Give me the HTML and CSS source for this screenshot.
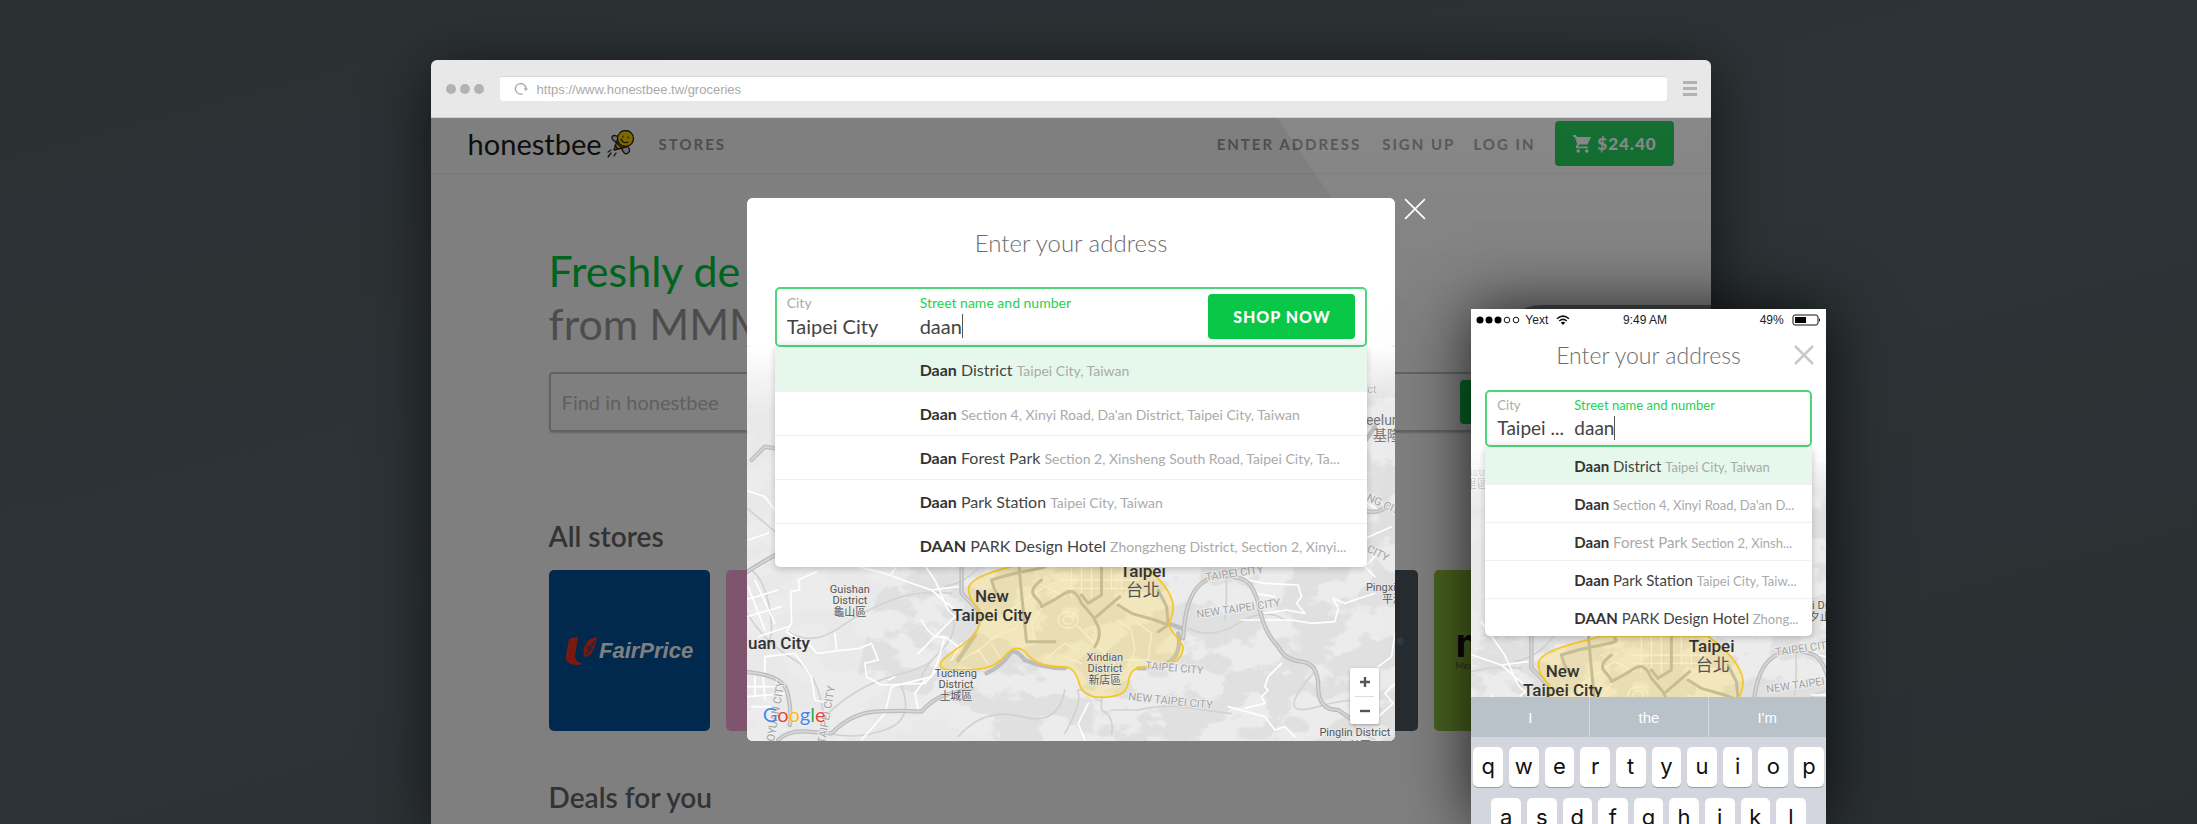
FILE: index.html
```html
<!DOCTYPE html>
<html lang="en">
<head>
<meta charset="utf-8">
<title>honestbee groceries</title>
<link rel="stylesheet" href="styles.css">
</head>
<body>
<svg class="defs" width="0" height="0" aria-hidden="true">
  <defs>
    <filter id="terrain" x="0" y="0" width="100%" height="100%">
      <feTurbulence type="fractalNoise" baseFrequency="0.024 0.034" numOctaves="5" seed="11"/>
      <feColorMatrix values="0 0 0 0 0.84  0 0 0 0 0.84  0 0 0 0 0.84  12 0 0 0 -5.8"/>
    </filter>
    <symbol id="map" viewBox="0 0 649 395" overflow="visible">
      <rect width="649" height="395" fill="#e9e9e9"/>
      <path d="M230 0H649V395H250L215 360 110 330 130 250 200 180Z" fill="#e0e0e0"/>
      <rect width="649" height="395" filter="url(#terrain)"/>
      <g transform="translate(-2 214) scale(.33333)" fill="none" stroke-linejoin="round" stroke-linecap="round">
        <g stroke="#d2d2d2" stroke-width="5">
          <path d="M0 150Q60 250 150 300T240 540M20 30Q60 60 75 150T60 260M130 215Q200 260 280 205T440 120 620 100M0 -160Q50 -120 120 -60M240 470Q330 380 440 350T560 300M255 520Q330 540 420 510T470 380M1070 410V450Q1110 470 1100 520M1068 425Q990 370 1000 400T960 520M600 120Q660 200 590 270T530 370M730 -20Q690 60 600 80"/>
          <path d="M1330 205Q1400 240 1480 190T1620 180M1100 450H1180Q1260 430 1350 445T1460 460M1890 540Q1800 500 1830 450T1720 440 1710 335M1440 30Q1450 90 1440 180M640 530Q720 440 830 470T960 390"/>
        </g>
        <g stroke="#fff" stroke-width="5">
          <path d="M215 35L160 60 165 90 138 95 140 190 125 215 200 260 215 280 300 270 345 265 380 250 400 300 360 310 365 350 410 375 540 370 575 330"/>
          <path d="M10 80L60 210M30 60L90 190M0 120L100 90M5 170L110 140M40 230L130 200M60 290L150 280 200 350 210 420 250 430M30 350V410M55 350L60 420M5 380H100M5 410L130 400M20 440H90M60 290V340M270 220L275 270"/>
          <path d="M320 -30L340 20 420 40 500 70 560 90 640 80M440 40L470 0M500 -40L570 60 610 150 640 180M530 180Q560 240 600 230L640 260M520 280L600 200 650 150M600 230L580 300 560 350 440 380 420 460 350 540M620 300L650 250M560 90L630 150M430 360L450 350M520 450L510 400 540 360M0 -210L60 -190 90 -150M10 -60L70 -80"/>
          <path d="M1490 40L1510 60 1560 70 1660 75 1670 110 1655 130 1680 160 1625 150 1560 160M1510 70L1530 100 1590 110M1610 310L1570 350 1560 380 1570 390 1550 410 1560 430 1500 445M1490 180L1640 180 1700 190 1770 185 1780 145 1765 115 1800 130 1890 100M1950 220L1940 290 1900 320M1890 -10L1860 20 1890 50M1950 370L1920 400 1945 430 1900 470M1030 430L1000 490 1020 540M1450 440L1560 470 1590 510 1620 500 1650 530M1820 -200L1900 -150 1950 -170M1850 -60L1940 -100"/>
        </g>
        <g stroke="#bdbdbd" stroke-width="13">
          <path d="M0 335Q110 345 125 390T135 495M100 540Q130 510 190 515T260 520Q320 460 390 455T530 455Q560 420 600 405L680 385M0 40Q60 0 120 -30T200 -60M650 -10V100L700 150M690 225L640 300M725 340Q770 320 800 275 815 270 840 300 900 325 960 325M1300 220Q1320 330 1180 325M1315 235Q1320 110 1370 70T1500 60Q1530 80 1545 150T1600 260Q1620 300 1670 305T1720 380 1780 450L1830 485M1270 190L1315 207M1240 -240Q1300 -130 1400 -80M1840 -320Q1820 -240 1840 -180T1930 -160M1890 -400L1850 -340M20 -300L60 -340 120 -330"/>
        </g>
        <g stroke="#d7d7d7" stroke-width="5">
          <path d="M0 335Q110 345 125 390T135 495M100 540Q130 510 190 515T260 520Q320 460 390 455T530 455Q560 420 600 405L680 385M0 40Q60 0 120 -30T200 -60M650 -10V100L700 150M1315 235Q1320 110 1370 70T1500 60Q1530 80 1545 150T1600 260Q1620 300 1670 305T1720 380 1780 450L1830 485M1840 -320Q1820 -240 1840 -180T1930 -160M20 -300L60 -340 120 -330"/>
        </g>
        <g stroke="#f6f6f6" stroke-width="4">
          <path d="M950 60H1180M950 85H1170M980 0V110M1010 0V120M1040 0V110M1100 0V90M1130 10V90M1160 20V80M860 60L960 110M780 160L900 80M900 130L860 190 870 250M940 180A30 24 0 1 0 1000 180 30 24 0 1 0 940 180M955 180A15 12 0 1 0 985 180 15 12 0 1 0 955 180M1000 200L1060 260 1110 310M1120 180L1160 210 1170 270 1150 320M1180 190L1220 220 1210 300 1100 300M740 250L770 300M900 300L960 250 1000 270M650 300L700 270 730 310M690 280L750 230 820 200M1010 310L960 290"/>
        </g>
        <g stroke="#b4b4b4" stroke-width="9">
          <path d="M740 60Q750 100 770 120M820 -10L830 100 845 245H930M890 60Q850 90 870 110T890 140Q930 120 960 100T1010 130L1045 170 1060 200Q1070 230 1050 260M1070 -10V105L1030 130 1010 105M1055 170L1125 110M740 60Q800 40 860 30T900 10M1120 135L1160 160 1230 180 1270 195 1240 215M1240 90L1265 140 1270 190"/>
        </g>
        <path d="M861 3C800 22 690 40 672 80C668 110 685 125 700 150C712 185 702 205 684 228C640 270 590 290 586 315C586 332 620 330 680 329C740 325 760 312 790 278C808 262 825 262 840 275C870 312 900 320 950 320C975 320 990 330 1000 360C1008 400 1030 412 1070 412C1120 412 1145 400 1150 370C1155 330 1170 322 1200 322C1270 320 1313 310 1315 262C1300 225 1272 215 1272 190C1290 150 1290 130 1270 95C1250 60 1215 30 1179 3Z" fill="#ffd52b" fill-opacity=".25" stroke="#f6c623" stroke-width="5"/>
      </g>
    </symbol>
    <symbol id="cross" viewBox="0 0 20 20"><path d="M1 1L19 19M19 1L1 19" fill="none" stroke="currentColor"/></symbol>
  </defs>
</svg>

<main class="scene">
  <section class="browser">
    <div class="chrome">
      <div class="dots"><i></i><i></i><i></i></div>
      <div class="address">
        <svg width="14" height="14" viewBox="0 0 14 14" aria-hidden="true"><path d="M8.500 11.800A5.300 5.300 0 1 1 12 7" fill="none" stroke="#a5a5a5" stroke-width="1.300"/><path d="M9.600 6.500H14L11.800 9Z" fill="#a5a5a5"/></svg>
        <input class="url" aria-label="Address" value="https://www.honestbee.tw/groceries">
      </div>
      <button class="burger" aria-label="Menu"><i></i><i></i><i></i></button>
    </div>

    <div class="page">
      <header class="nav">
        <a class="logo" href="#">honestbee
          <svg width="28" height="28" viewBox="0 0 28 28" aria-hidden="true">
            <g stroke="#222" stroke-width="1.300" stroke-linejoin="round" stroke-linecap="round">
              <path d="M12 7Q6 4 5 7T11 13ZM19 15Q25 20 21 23T14 17Z" fill="#ddd"/>
              <path d="M11 8L7 20 19 17 25 12Z" fill="#ffd000"/>
              <circle cx="18.500" cy="8.500" r="8" fill="#ffd000"/>
              <path d="M9 12L15 18M8 15.500L11 19" fill="none"/>
              <path d="M14 9Q16 14 21 12M16 6V7M21 7V8" fill="none" stroke-width="1.200"/>
              <path d="M1 22L4 20M1 27L4 23M7 26L9 23" fill="none" stroke-width="1.300"/>
            </g>
          </svg>
        </a>
        <a class="navlink stores-link" href="#">STORES</a>
        <nav class="account">
          <a class="navlink enter" href="#">ENTER ADDRESS</a>
          <a class="navlink" href="#">SIGN UP</a>
          <a class="navlink" href="#">LOG IN</a>
        </nav>
        <button class="cart">
          <svg width="18" height="18" viewBox="0 0 18 18" aria-hidden="true"><path d="M0 0H3L4 2H18L14.500 9.500H6L5 11.500H15V13.300H4Q2 13 3 11L4.200 9 1.800 2H0Z" fill="#fff"/><circle cx="5.200" cy="16" r="1.800" fill="#fff"/><circle cx="13.800" cy="16" r="1.800" fill="#fff"/></svg>
          $24.40
        </button>
      </header>

      <div class="content">
        <h1 class="hero"><span>Freshly de</span><br>from MMM</h1>
        <form class="search">
          <input aria-label="Find in honestbee" placeholder="Find in honestbee">
          <button type="button" aria-label="Search"></button>
        </form>
        <h2 class="heading">All stores</h2>
        <div class="cards">
          <a class="card blue" href="#">
            <svg width="32" height="30" viewBox="0 0 32 30" aria-hidden="true"><path d="M4 3Q8 1 13 1L10 20Q10 26 18 28 12 30 6 28 0 26 1 19Z" fill="#f4331f"/><path d="M22 6Q25 2 32 1L30 10Q28 20 19 21 17 12 22 6Z" fill="#f4331f"/><path d="M30 4L21 19M29 8L23 12M28 12L22 16M22 9L24 13" stroke="#00529a" fill="none"/></svg>
            <span class="fairprice">FairPrice</span>
          </a>
          <a class="card pink" href="#" aria-label="Store"></a>
          <a class="card pink" href="#" aria-label="Store"></a>
          <a class="card pink" href="#" aria-label="Store"></a>
          <a class="card slate" href="#"><span class="mark">®</span></a>
          <a class="card lime" href="#"><span class="em">m</span><small>Mea</small></a>
        </div>
        <h2 class="heading">Deals for you</h2>
      </div>

      <div class="device"></div>
      <div class="dim"></div>
      <div class="glare"></div>

      <div class="overlay">
        <section class="modal" aria-label="Enter your address">
          <svg class="map" viewBox="0 0 649 395" preserveAspectRatio="xMidYMax slice">
            <use href="#map" width="649" height="395"/>
            <g class="town">
              <text x="103" y="247">Guishan</text><text x="103" y="258">District</text><text x="103" y="270">龜山區</text>
              <text x="209" y="331">Tucheng</text><text x="209" y="342">District</text><text x="209" y="354">土城區</text>
              <text x="358" y="315">Xindian</text><text x="358" y="326">District</text><text x="358" y="338">新店區</text>
              <text x="634" y="245">Pingxi</text><text x="646" y="257">平溪</text>
              <text x="608" y="390">Pinglin District</text><text x="608" y="404">坪林區</text>
              <text x="625" y="47" opacity=".5">ct</text>
            </g>
            <g class="city">
              <text x="245" y="256">New</text><text x="245" y="275">Taipei City</text>
              <text x="32" y="303">uan City</text><text x="396" y="231">Taipei</text>
            </g>
            <g class="city light"><text x="396" y="250">台北</text></g>
            <g class="port"><text x="619" y="79">eelung</text><text x="626" y="94">基隆</text></g>
            <g class="region">
              <text transform="translate(459 235) rotate(-8)">TAIPEI CITY</text>
              <text transform="translate(450 272) rotate(-8)">NEW TAIPEI CITY</text>
              <text transform="translate(398 323) rotate(5)">TAIPEI CITY</text>
              <text transform="translate(381 354) rotate(6)">NEW TAIPEI CITY</text>
              <text transform="translate(27 396) rotate(-80)">OYUAN CITY</text>
              <text transform="translate(78 398) rotate(-80)">TAIPEI CITY</text>
              <text transform="translate(619 154) rotate(25)">NG CITY</text>
              <text transform="translate(619 205) rotate(28)">CITY</text>
            </g>
          </svg>
          <div class="sheet">
            <h2 class="title">Enter your address</h2>
            <form class="field">
              <label class="cell city-cell"><span>City</span><input value="Taipei City"></label>
              <label class="cell street-cell"><span>Street name and number</span><span class="typing"><input class="typed" value="daan"><i class="caret"></i></span></label>
              <button class="shop" type="button">SHOP NOW</button>
            </form>
          </div>
          <ul class="results">
            <li class="active"><button><b>Daan</b> District <span>Taipei City, Taiwan</span></button></li>
            <li><button><b>Daan</b> <span>Section 4, Xinyi Road, Da'an District, Taipei City, Taiwan</span></button></li>
            <li><button><b>Daan</b> Forest Park <span>Section 2, Xinsheng South Road, Taipei City, Ta...</span></button></li>
            <li><button><b>Daan</b> Park Station <span>Taipei City, Taiwan</span></button></li>
            <li><button><b>DAAN</b> PARK Design Hotel <span>Zhongzheng District, Section 2, Xinyi...</span></button></li>
          </ul>
          <footer class="mapbar">
            <span class="google"><span class="g1">G</span><span class="g2">o</span><span class="g3">o</span><span class="g1">g</span><span class="g4">l</span><span class="g2">e</span></span>
            <div class="zoom">
              <button aria-label="Zoom in"><svg width="10" height="10" viewBox="0 0 10 10"><path d="M5 0V10M0 5H10" stroke="#555" stroke-width="2.400"/></svg></button>
              <button aria-label="Zoom out"><svg width="10" height="10" viewBox="0 0 10 10"><path d="M0 5H10" stroke="#555" stroke-width="2.400"/></svg></button>
            </div>
          </footer>
          <button class="close" aria-label="Close"><svg width="22" height="22" stroke-width="1.500"><use href="#cross"/></svg></button>
        </section>
      </div>
    </div>
  </section>

  <section class="phone" aria-label="Phone">
    <div class="status">
      <svg width="44" height="8" viewBox="0 0 44 8" aria-hidden="true"><circle cx="4" cy="4" r="3.500"/><circle cx="13" cy="4" r="3.500"/><circle cx="22" cy="4" r="3.500"/><g fill="none" stroke="#111"><circle cx="31" cy="4" r="2.800"/><circle cx="40" cy="4" r="2.800"/></g></svg>
      <span>Yext</span>
      <svg width="14" height="10" viewBox="0 0 14 10" aria-hidden="true"><path d="M1 3.800Q7 -1.600 13 3.800M3.200 6Q7 2.700 10.800 6" fill="none" stroke="#111" stroke-width="1.500"/><path d="M4.800 7.500Q7 5.800 9.200 7.500L7 10Z"/></svg>
      <time>9:49 AM</time>
      <span class="percent">49%</span>
      <svg width="29" height="12" viewBox="0 0 29 12" aria-hidden="true"><rect x="1" y="1" width="25" height="10" rx="2" fill="none" stroke="#111"/><rect x="3" y="3" width="11" height="6"/><path d="M27 4Q29 6 27 8Z"/></svg>
    </div>
    <div class="phone-body">
      <svg class="map" viewBox="154 26 355 250" preserveAspectRatio="xMidYMax slice">
        <use href="#map" width="649" height="395"/>
        <g class="town">
          <text x="161" y="55" opacity=".5">istr</text><text x="160" y="67" opacity=".5">里區</text>
          <text x="503" y="188">i Di</text><text x="503" y="200">夕止</text>
        </g>
        <g class="city"><text x="246" y="256">New</text><text x="246" y="275">Taipei City</text><text x="395" y="231">Taipei</text></g>
        <g class="city light"><text x="396" y="250">台北</text></g>
        <g class="region">
          <text transform="translate(459 235) rotate(-8)">TAIPEI CITY</text>
          <text transform="translate(450 272) rotate(-8)">NEW TAIPEI CITY</text>
        </g>
      </svg>
      <div class="sheet">
        <h2 class="title">Enter your address</h2>
        <form class="field">
          <label class="cell city-cell"><span>City</span><input value="Taipei ..."></label>
          <label class="cell street-cell"><span>Street name and number</span><span class="typing"><input class="typed" value="daan"><i class="caret"></i></span></label>
        </form>
        <button class="dismiss" aria-label="Close"><svg width="20" height="20" stroke-width="2.500"><use href="#cross"/></svg></button>
      </div>
      <ul class="results">
        <li class="active"><button><b>Daan</b> District <span>Taipei City, Taiwan</span></button></li>
        <li><button><b>Daan</b> <span>Section 4, Xinyi Road, Da'an D...</span></button></li>
        <li><button><b>Daan</b> <span class="place">Forest Park</span> <span>Section 2, Xinsh...</span></button></li>
        <li><button><b>Daan</b> Park Station <span>Taipei City, Taiw...</span></button></li>
        <li><button><b>DAAN</b> PARK Design Hotel <span>Zhong...</span></button></li>
      </ul>
    </div>
    <div class="suggest"><button>I</button><button>the</button><button>I'm</button></div>
    <div class="keyboard">
      <div class="keys"><button>q</button><button>w</button><button>e</button><button>r</button><button>t</button><button>y</button><button>u</button><button>i</button><button>o</button><button>p</button></div>
      <div class="keys second"><button>a</button><button>s</button><button>d</button><button>f</button><button>g</button><button>h</button><button>j</button><button>k</button><button>l</button></div>
    </div>
  </section>
</main>
</body>
</html>
```
FILE: styles.css
```css
* { box-sizing: border-box; }
body { margin: 0; font-family: Lato, "Noto Sans CJK TC", sans-serif; color: #444; }
button, input { font: inherit; color: inherit; border: 0; padding: 0; margin: 0; background: none; outline: 0; border-radius: 0; }
h1, h2, ul { margin: 0; padding: 0; font-weight: 400; list-style: none; }
a { color: inherit; text-decoration: none; }
svg { display: block; flex: none; }
.defs { position: absolute; }

.scene {
  position: relative;
  height: 100vh;
  min-height: 600px;
  overflow: hidden;
  display: flex;
  padding: 60px 22.100% 0 19.600%;
  background: linear-gradient(165deg, #2b3033, #2d3336 50%, #2a2f32);
}

/* Browser window */
.browser { flex: 1; min-width: 0; display: flex; flex-direction: column; border-radius: 6px 6px 0 0; box-shadow: 0 10px 60px rgba(0, 0, 0, .6); }
.chrome { height: 58px; flex: none; display: flex; align-items: center; gap: 16px; padding: 0 14px 0 15px; background: #e8e8e8; border-bottom: 1px solid #d0d0d0; border-radius: 6px 6px 0 0; }
.dots { display: flex; gap: 4px; }
.dots i { width: 10px; height: 10px; border-radius: 50%; background: #b2b2b2; }
.address { flex: 1; height: 25px; display: flex; align-items: center; gap: 9px; padding: 0 14px; background: #fff; border-top: 1px solid #d8d8d8; border-radius: 3px; }
.url { flex: 1; font: 13px "Liberation Sans", sans-serif; color: #aaa; }
.burger { display: flex; flex-direction: column; gap: 3px; }
.burger i { width: 14px; height: 3px; background: #b2b2b2; }

.page { position: relative; flex: 1; background: #fff; min-height: 0; }
.nav { height: 56px; display: flex; align-items: center; padding: 0 37px 4px; border-bottom: 1px solid #f0f0f0; }
.logo { display: flex; align-items: center; gap: 5px; font-size: 29px; line-height: 40px; color: #1c1c1c; }
.navlink { font-size: 15px; font-weight: 700; letter-spacing: 2px; color: #9c9c9c; }
.stores-link { margin-left: 24px; }
.account { margin-left: auto; display: flex; gap: 18px; margin-right: 20px; }
.enter { margin-right: 3px; }
.cart { width: 119px; height: 45px; display: flex; align-items: center; justify-content: center; gap: 6px; background: #0ac846; color: #fff; font-size: 17px; font-weight: 900; letter-spacing: 1px; border-radius: 4px; }

.content { padding: 0 118px; height: calc(100% - 56px); overflow: hidden; }
.hero { margin-top: 70px; font-size: 43px; line-height: 53px; color: #999; white-space: nowrap; }
.hero span { color: #00c83c; }
.search { margin-top: 22px; height: 60px; display: flex; align-items: center; padding: 0 7px 0 11px; border: 2px solid #c4c4c4; border-radius: 4px; box-shadow: 0 1px 2px #ccc; }
.search input { flex: 1; font-size: 20px; }
.search input::placeholder { color: #c0c0c0; opacity: 1; }
.search button { width: 124px; height: 44px; border-radius: 4px; background: #0ac846; }
.heading { font-size: 28px; line-height: 32px; font-weight: 600; color: #666; }
.search + .heading { margin-top: 88px; }
.cards { display: flex; gap: 16px; margin: 18px 0 50px; }
.card { flex: none; width: 161px; height: 161px; border-radius: 5px; display: flex; align-items: center; justify-content: center; gap: 2px; }
.blue { background: #00529a; }
.pink { background: #ffa8de; }
.slate { background: #4e5860; }
.lime { background: #90c43e; flex-direction: column; align-items: flex-start; padding-left: 22px; gap: 0; color: #111; }
.fairprice { font: italic 700 22px "Liberation Sans", sans-serif; color: #fff; }
.mark { margin: 0 14px 18px auto; font-size: 9px; color: #999; }
.em { font: 700 40px/30px Inter, sans-serif; }
.lime small { font-size: 9px; line-height: 16px; color: #4d6a1f; }

.device { position: absolute; right: 0; top: 187px; width: 210px; height: 100px; border-radius: 40px 0 0 0; background: #8a8d90; }
.dim { position: absolute; inset: 0; background: rgba(0, 0, 0, .5); }
.glare { position: absolute; top: 0; right: 0; width: 434px; height: 640px; clip-path: polygon(0 0, 100% 0, 100% 100%); background: linear-gradient(rgba(255, 255, 255, .07), rgba(255, 255, 255, .01) 35%, transparent 50%); }
.overlay { position: absolute; inset: 0; display: flex; justify-content: center; align-items: flex-start; padding-top: 80px; }

/* Address panel */
.modal { position: relative; width: 50.650%; background: #fff; border-radius: 6px; }
.map { position: absolute; left: 0; right: 0; bottom: 0; width: 100%; z-index: 0; }
.modal > .map { height: 395px; border-radius: 0 0 6px 6px; }
.map text { font-family: Roboto, "Noto Sans CJK TC", sans-serif; }
.town text { font-size: 11px; text-anchor: middle; fill: #555; stroke: #eee; stroke-width: 1px; paint-order: stroke; }
.city text { font-size: 17px; font-weight: 500; text-anchor: middle; fill: #333; }
.light text { font-weight: 400; fill: #555; }
.port text { font-size: 14px; fill: #777; }
.region text { font-size: 11px; fill: #a2a2a2; stroke: #eee; stroke-width: 2px; paint-order: stroke; }

.sheet { position: relative; padding: 35px 28px 0; background: #fff; }
.sheet::after { content: ""; position: absolute; left: 0; right: 0; top: 100%; height: 60px; background: linear-gradient(#fff, rgba(255, 255, 255, 0)); pointer-events: none; }
.modal .sheet { border-radius: 6px; }
.title { font-size: 24px; line-height: 20px; font-weight: 300; text-align: center; color: #6c6c6c; margin: 0; }
.field { position: relative; z-index: 1; margin-top: 34px; height: 60px; display: flex; align-items: center; border: 2px solid #4cd579; border-radius: 5px; background: linear-gradient(#fff 88%, #f3f3f3); }
.cell { display: flex; flex-direction: column; min-width: 0; }
.cell > span:first-child { font-size: 14px; line-height: 18px; color: #aaa; }
.cell input { width: 100%; font-size: 20px; line-height: 24px; height: 28px; }
.city-cell { padding-left: 10px; width: 143px; }
.street-cell { flex: 1; }
.street-cell > span:first-child { color: #1fcf57; }
.typing { display: flex; align-items: center; }
.typing .typed { width: auto; field-sizing: content; }
.caret { width: 1px; height: 24px; background: #555; }
.shop { width: 147px; height: 45px; margin: 0 10px 2px 0; background: #09c847; color: #fff; border-radius: 4px; font-size: 16px; font-weight: 900; letter-spacing: 1px; }

.results { position: relative; z-index: 1; margin: 0 28px; background: #fff; border-radius: 0 0 5px 5px; box-shadow: 0 2px 6px rgba(0, 0, 0, .2); overflow: hidden; }
.results li + li { border-top: 1px solid #f1f1f1; }
.results .active { background: #e5f8eb; }
.results button { display: block; width: 100%; height: 43px; padding: 0 8px 0 145px; font-size: 16px; text-align: left; white-space: nowrap; overflow: hidden; color: #444; }
.modal .active button { height: 44px; }
.results b { font-weight: 700; color: #333; }
.results button span { font-size: 14px; color: #aaa; }
.mapbar { position: relative; min-height: 174px; display: flex; align-items: flex-end; justify-content: space-between; padding: 0 16px 17px; }
.google { font-size: 20px; line-height: 20px; text-shadow: 0 0 2px #fff; }
.g1 { color: #4285f4; } .g2 { color: #ea4335; } .g3 { color: #fbbc05; } .g4 { color: #34a853; }
.zoom { display: flex; flex-direction: column; width: 29px; padding: 0 5px; background: #fff; border-radius: 2px; box-shadow: 0 1px 3px rgba(0, 0, 0, .3); }
.zoom button { height: 28px; display: flex; align-items: center; justify-content: center; }
.zoom button + button { border-top: 1px solid #ddd; }
.close { position: absolute; left: calc(100% + 9px); top: 0; color: #fff; }

/* Phone */
.phone { position: absolute; left: 66.970%; top: 309px; bottom: 0; width: 16.130%; overflow: hidden; background: #fff; display: flex; flex-direction: column; box-shadow: 0 0 60px rgba(0, 0, 0, .75); }
.status { position: relative; height: 22px; flex: none; display: flex; align-items: center; gap: 5px; padding: 0 5px; font: 12px "Liberation Sans", sans-serif; color: #222; }
.status time { position: absolute; left: 0; right: 0; text-align: center; padding-right: 7px; }
.status svg:nth-of-type(2) { margin-left: 3px; }
.percent { margin-left: auto; margin-right: 3px; }
.phone-body { position: relative; flex: none; padding-bottom: 61px; }
.phone-body .map { height: 250px; }
.phone .sheet { padding: 14px 14px 0; }
.phone .title { font-size: 23px; }
.phone .field { margin-top: 25px; height: 57px; }
.phone .cell > span:first-child { font-size: 13px; }
.phone .cell input { font-size: 19px; }
.phone .city-cell { width: 87px; }
.phone .results { margin: 0 14px; }
.phone .results button { height: 37px; padding-left: 89px; font-size: 15px; }
.phone .results button span { font-size: 13px; }
.phone .results button .place { font-size: 15px; }
.dismiss { position: absolute; right: 12px; top: 14px; color: #c9c9c9; }
.suggest { flex: none; height: 40px; display: grid; grid-template-columns: repeat(3, 1fr); background: #b9c1c9; }
.suggest button { font: 15px "Liberation Sans", sans-serif; color: #fff; }
.suggest button + button { border-left: 1px solid #d3d8dd; }
.keyboard { flex: none; background: #d3d6de; padding: 10px 2px; display: flex; flex-direction: column; gap: 11px; }
.keys { display: grid; grid-template-columns: repeat(10, 1fr); gap: 6px; }
.keys.second { grid-template-columns: repeat(9, 1fr); padding: 0 18px; }
.keys button { height: 40px; padding-bottom: 2px; background: #fff; border-radius: 5px; box-shadow: 0 1px 0 #9a9da3; font: 22px Inter, sans-serif; color: #111; }
```
